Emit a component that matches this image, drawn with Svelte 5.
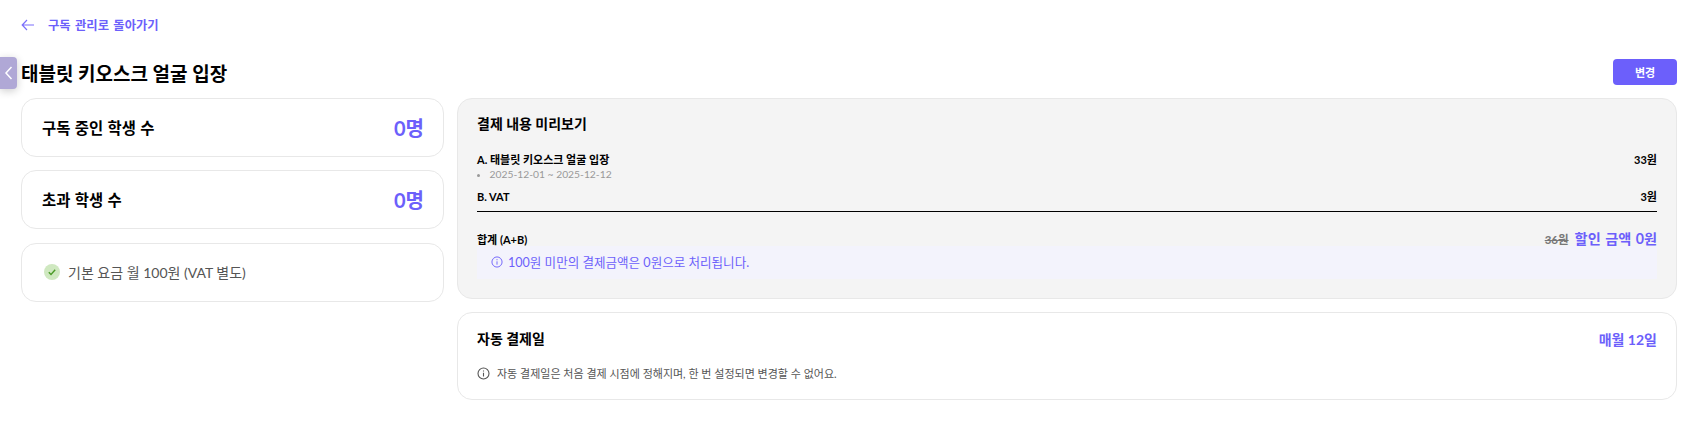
<script lang="ts">
	const items = [
		{ label: 'A. 태블릿 키오스크 얼굴 입장', price: '33원', period: '2025-12-01 ~ 2025-12-12' },
		{ label: 'B. VAT', price: '3원' }
	];
</script>

<button class="toggle" aria-label="사이드바 접기">
	<svg width="10" height="16" viewBox="0 0 10 16" fill="none" stroke="#fff" stroke-width="1.5">
		<path d="M7.5 2 2 8l5.5 6" />
	</svg>
</button>

<main class="page">
	<a class="back" href="#back">
		<svg width="14" height="12" viewBox="0 0 14 12" fill="none" stroke="#7a6ffb" stroke-width="1.2">
			<path d="M13 6H1.2M6 1 1.2 6 6 11" />
		</svg>
		<span>구독 관리로 돌아가기</span>
	</a>

	<header class="head">
		<h1>태블릿 키오스크 얼굴 입장</h1>
		<button class="change">변경</button>
	</header>

	<div class="columns">
		<section class="left">
			<div class="card stat">
				<span class="stat__label">구독 중인 학생 수</span>
				<span class="stat__value">0명</span>
			</div>
			<div class="card stat">
				<span class="stat__label">초과 학생 수</span>
				<span class="stat__value">0명</span>
			</div>
			<div class="card stat base">
				<svg width="16" height="16" viewBox="0 0 16 16" fill="none">
					<circle cx="8" cy="8" r="8" fill="#cfe8c0" />
					<path d="M4.8 8.2 7 10.4l4.2-4.6" stroke="#4a9a26" stroke-width="1.4" />
				</svg>
				<span>기본 요금 월 100원 (VAT 별도)</span>
			</div>
		</section>

		<section class="right">
			<div class="card preview">
				<h2>결제 내용 미리보기</h2>
				<div class="lines">
					{#each items as item}
						<div class="line">
							<div class="line__row">
								<span>{item.label}</span>
								<span>{item.price}</span>
							</div>
							{#if item.period}
								<ul class="period"><li>{item.period}</li></ul>
							{/if}
						</div>
					{/each}
				</div>
				<div class="total">
					<span class="total__label">합계 (A+B)</span>
					<span class="total__amounts">
						<s>36원</s>
						<strong>할인 금액 0원</strong>
					</span>
				</div>
				<div class="notice">
					<svg width="12" height="12" viewBox="0 0 13 13" fill="none" stroke="#6c5ffb" stroke-width="1">
						<circle cx="6.5" cy="6.5" r="5.5" />
						<path d="M6.5 5.8v3.6M6.5 3.4v1.2" />
					</svg>
					<span>100원 미만의 결제금액은 0원으로 처리됩니다.</span>
				</div>
			</div>

			<div class="card auto">
				<div class="auto__row">
					<h2>자동 결제일</h2>
					<span class="auto__day">매월 12일</span>
				</div>
				<p class="auto__note">
					<svg width="13" height="13" viewBox="0 0 13 13" fill="none" stroke="#555" stroke-width="1.1">
						<circle cx="6.5" cy="6.5" r="5.5" />
						<path d="M6.5 5.8v3.6M6.5 3.4v1.2" />
					</svg>
					<span>자동 결제일은 처음 결제 시점에 정해지며, 한 번 설정되면 변경할 수 없어요.</span>
				</p>
			</div>
		</section>
	</div>
</main>

<style>
	:global(body) {
		background: #fff;
		font-family: Lato, 'Noto Sans CJK KR', sans-serif;
		color: #000;
	}
	.toggle {
		position: absolute;
		left: 0;
		top: 57px;
		width: 17px;
		height: 32px;
		padding: 0;
		border: 0;
		border-radius: 0 4px 4px 0;
		background: #b0a8d6;
		box-shadow: 0 2px 8px rgba(0, 0, 0, 0.2);
		display: flex;
		align-items: center;
		justify-content: center;
	}
	.page {
		padding: 16px 13px 0 21px;
	}
	.back {
		display: flex;
		align-items: center;
		gap: 13px;
		height: 17px;
		font-size: 12.3px;
		word-spacing: 1.4px;
		font-weight: 700;
		color: #6c5ffb;
		text-decoration: none;
	}
	.head {
		display: flex;
		align-items: center;
		justify-content: space-between;
		margin: 19px 0 6px;
		height: 40px;
	}
	h1 {
		margin: 0;
		font-size: 19px;
		font-weight: 700;
	}
	.change {
		width: 64px;
		height: 26px;
		border: 0;
		border-radius: 4px;
		background: #6c5ffb;
		color: #fff;
		font: inherit;
		font-size: 11px;
		font-weight: 700;
	}
	.columns {
		display: grid;
		grid-template-columns: 423px 1fr;
		gap: 13px;
		align-items: start;
	}
	.left {
		display: flex;
		flex-direction: column;
		gap: 13.4px;
	}
	.right {
		display: flex;
		flex-direction: column;
		gap: 13px;
	}
	.card {
		box-sizing: border-box;
		border: 1px solid #e8e8e8;
		border-radius: 15px;
		background: #fff;
	}
	.stat {
		display: flex;
		align-items: center;
		justify-content: space-between;
		height: 59px;
		padding: 0 19px 1px 20px;
	}
	.stat__label {
		font-size: 15.4px;
		word-spacing: 0.7px;
		font-weight: 700;
	}
	.stat__value {
		font-size: 20px;
		font-weight: 700;
		color: #6c5ffb;
	}
	.base {
		justify-content: flex-start;
		gap: 8px;
		padding: 0 22px;
		font-size: 14px;
		color: #555;
	}
	.preview {
		height: 201px;
		padding: 15px 19px 0;
		background: #f4f4f4;
	}
	h2 {
		margin: 0;
		font-size: 14px;
		font-weight: 700;
		line-height: 20px;
	}
	.lines {
		margin-top: 18px;
		padding-bottom: 6px;
		border-bottom: 1px solid #000;
		display: flex;
		flex-direction: column;
		gap: 8px;
	}
	.line__row,
	.total {
		display: flex;
		align-items: center;
		justify-content: space-between;
		font-size: 11px;
		font-weight: 700;
	}
	.line__row {
		line-height: 16px;
	}
	.period {
		margin: -1px 0 0;
		padding-left: 12.5px;
		font-size: 10.3px;
		line-height: 14px;
		color: #999;
	}
	.total {
		margin-top: 19px;
		height: 15px;
	}
	.total__amounts {
		display: flex;
		align-items: baseline;
		gap: 6px;
		margin-bottom: 2px;
	}
	.total s {
		font-size: 11.5px;
		color: #777;
	}
	.total strong {
		font-size: 14.2px;
		word-spacing: 1px;
		font-weight: 700;
		color: #6c5ffb;
	}
	.notice {
		display: flex;
		align-items: center;
		gap: 5px;
		box-sizing: border-box;
		height: 33px;
		padding: 0 0 2px 14px;
		background: #f3f3fc;
		font-size: 12.55px;
		color: #6c5ffb;
	}
	.auto {
		height: 88px;
		padding: 16px 19px 0;
	}
	.auto__row {
		display: flex;
		align-items: center;
		justify-content: space-between;
	}
	.auto__day {
		font-size: 14px;
		font-weight: 700;
		color: #6c5ffb;
	}
	.auto__note {
		display: flex;
		align-items: center;
		gap: 7px;
		margin: 16px 0 0;
		font-size: 11px;
		color: #555;
	}
</style>
